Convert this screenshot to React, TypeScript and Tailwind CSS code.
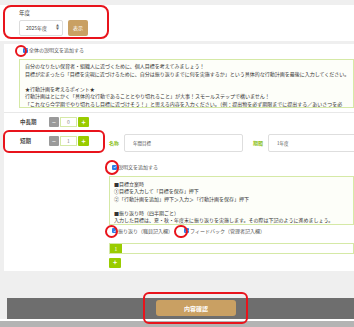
import React from 'react';

const font = { fontFamily: '"Noto Sans CJK JP", "Noto Sans", sans-serif' };

function Check() {
  return (
    <span className="inline-flex h-[5px] w-[5px] shrink-0 items-center justify-center rounded-[1px] bg-[#2b7de9]">
      <svg viewBox="0 0 10 10" className="h-[4px] w-[4px]">
        <path d="M2 5.2 4.2 7.4 8.2 2.8" fill="none" stroke="#fff" strokeWidth="1.8" />
      </svg>
    </span>
  );
}

function Stepper({ value }: { value: string }) {
  return (
    <div className="flex h-[10px] shrink-0 items-stretch gap-[1px]">
      <span className="flex w-[10px] items-center justify-center rounded-[1px] bg-[#9a9a9a] text-[7px] leading-none text-white">−</span>
      <span className="flex w-[17px] items-center justify-center border border-[#d5e9a6] bg-white text-[5px] text-[#888]">{value}</span>
      <span className="flex w-[11px] items-center justify-center rounded-[1px] bg-[#99cc00] text-[7px] font-bold leading-none text-white">+</span>
    </div>
  );
}

const guide1 = [
  '自分のなりたい保育者・組織人に近づくために、個人目標を考えてみましょう！',
  '目標が定まったら「目標を実現に近づけるために、自分は振り返りまでに何を実施するか」という具体的な行動計画を最後に入力してください。',
  '\u00a0',
  '★行動計画を考えるポイント★',
  '行動計画はとにかく「具体的な行動であることとやり切れること」が大事！スモールステップで構いません！',
  '「これなら今学期でやり切れるし目標に近づけそう！」と思える内容を入力ください。（例：提出物を必ず期限までに提出する／あいさつを必',
];

const guide2 = [
  '■目標立案時',
  '①目標を入力して「目標を保存」押下',
  '②「行動計画を追加」押下＞入力＞「行動計画を保存」押下',
  '\u00a0',
  '■振り返り時（四半期ごと）',
  '入力した目標は、夏・秋・年度末に振り返りを実施します。その際は下記のように進めましょう。',
];

export default function App() {
  return (
    <div className="relative h-[327px] w-[354px] overflow-hidden whitespace-nowrap bg-[#efefef] text-[#333]" style={font}>
      {/* year selector */}
      <div className="pt-[5px]">
        <div className="h-[36px] bg-white pl-[19px] pt-[5px]">
          <div className="text-[5.5px] leading-[7px] text-[#444]">年度</div>
          <div className="mt-[3px] flex h-[16px] gap-[5px]">
            <div className="flex w-[44px] items-center justify-between rounded-[2px] border border-[#dcdcdc] bg-white pl-[6px] pr-[3px] text-[5px] text-[#444]">
              <span>2025年度</span>
              <span className="flex flex-col text-[3px] leading-[3px] text-[#666]">
                <span>▲</span>
                <span>▼</span>
              </span>
            </div>
            <button className="w-[20px] rounded-[2px] bg-[#c9a063] text-[5px] text-white">表示</button>
          </div>
        </div>
      </div>

      {/* main panel */}
      <div className="ml-[4px] mt-[3px] bg-white pb-[3px] pt-[2px]">
        <div className="flex h-[8px] items-center gap-[1px] pl-[19px] text-[5px] text-[#555]">
          <Check />
          <span>全体の説明文を追加する</span>
        </div>
        <div className="ml-[15px] mt-[5px] overflow-hidden border border-[#d5e9a6] bg-[#fdfef9] pl-[5px] pt-[2px] text-[5px] leading-[7.5px] text-[#333]">
          {guide1.map((l, i) => (
            <div key={i}>{l}</div>
          ))}
        </div>
        <div className="mt-[4px] border-t border-[#e8e8e8]" />

        <div className="pl-[16px]">
          <div className="mt-[4px] flex h-[10px] items-center">
            <span className="w-[29px] shrink-0 text-[5.5px] font-bold text-[#444]">中長期</span>
            <Stepper value="0" />
          </div>

          <div className="mt-[7px] flex items-start">
            <div className="mt-[2px] flex h-[10px] w-[89px] shrink-0 items-center">
              <span className="w-[29px] shrink-0 text-[5.5px] font-bold text-[#444]">短期</span>
              <Stepper value="1" />
            </div>
            <div className="flex h-[18px] shrink-0 items-stretch">
              <span className="flex w-[15px] items-center text-[5px] font-bold text-[#8cbf1a]">名称</span>
              <div className="flex w-[119px] items-center rounded-[2px] border border-[#dedede] bg-white pl-[8px] text-[4.5px] text-[#555]">年間目標</div>
              <span className="ml-[10px] flex w-[15px] items-center text-[5px] font-bold text-[#8cbf1a]">期間</span>
              <div className="flex w-[120px] items-center rounded-[2px] border border-[#dedede] bg-white pl-[8px] text-[4.5px] text-[#555]">1年度</div>
            </div>
          </div>

          <div className="ml-[89px]">
            <div className="mt-[11px] flex h-[8px] items-center gap-[1px] pl-[3px] text-[5px] text-[#555]">
              <Check />
              <span>説明文を追加する</span>
            </div>
            <div className="mt-[5px] border border-[#d5e9a6] bg-[#fdfef9] pl-[4px] pt-[3px] text-[5px] leading-[7.3px] text-[#333]">
              {guide2.map((l, i) => (
                <div key={i}>{l}</div>
              ))}
            </div>
            <div className="mt-[2px] flex h-[8px] items-center pl-[3px] text-[5px] text-[#555]">
              <Check />
              <span className="ml-[1px] w-[66px] shrink-0">振り返り（職員記入欄）</span>
              <Check />
              <span className="ml-[1px]">フィードバック（管理者記入欄）</span>
            </div>
            <div className="mt-[8px] flex h-[11px] border border-[#d5e9a6] bg-white">
              <span className="flex w-[12px] items-center justify-center bg-[#99cc00] text-[5px] text-white">1</span>
            </div>
            <div className="mt-[4px] flex h-[10px] w-[12px] items-center justify-center rounded-[1px] bg-[#99cc00] text-[7px] font-bold leading-none text-white">+</div>
          </div>
        </div>
      </div>

      {/* footer */}
      <div className="ml-[7px] mt-[27px] flex h-[21px] items-center bg-[#6e6e6e] pl-[149px]">
        <button className="h-[16px] w-[80px] rounded-[3px] bg-[#c9a063] text-[6px] font-bold text-white">内容確認</button>
      </div>
      <div className="h-[2px] bg-white" />
      <div className="h-[10px] bg-[#b4b4b4]" />

      {/* red annotations */}
      <div className="pointer-events-none absolute left-[3px] top-[5px] h-[34px] w-[106px] rounded-[8px] border-2 border-[#e8141c]" />
      <div className="pointer-events-none absolute left-[15px] top-[45px] h-[12px] w-[12px] rounded-full border-2 border-[#e8141c]" />
      <div className="pointer-events-none absolute left-[3px] top-[130px] h-[23px] w-[102px] rounded-[6px] border-2 border-[#e8141c]" />
      <div className="pointer-events-none absolute left-[105px] top-[160px] h-[15px] w-[14px] rounded-full border-2 border-[#e8141c]" />
      <div className="pointer-events-none absolute left-[105px] top-[225px] h-[13px] w-[13px] rounded-full border-2 border-[#e8141c]" />
      <div className="pointer-events-none absolute left-[174px] top-[225px] h-[13px] w-[14px] rounded-full border-2 border-[#e8141c]" />
      <div className="pointer-events-none absolute left-[143px] top-[292px] h-[32px] w-[105px] rounded-[6px] border-2 border-[#e8141c]" />
    </div>
  );
}
